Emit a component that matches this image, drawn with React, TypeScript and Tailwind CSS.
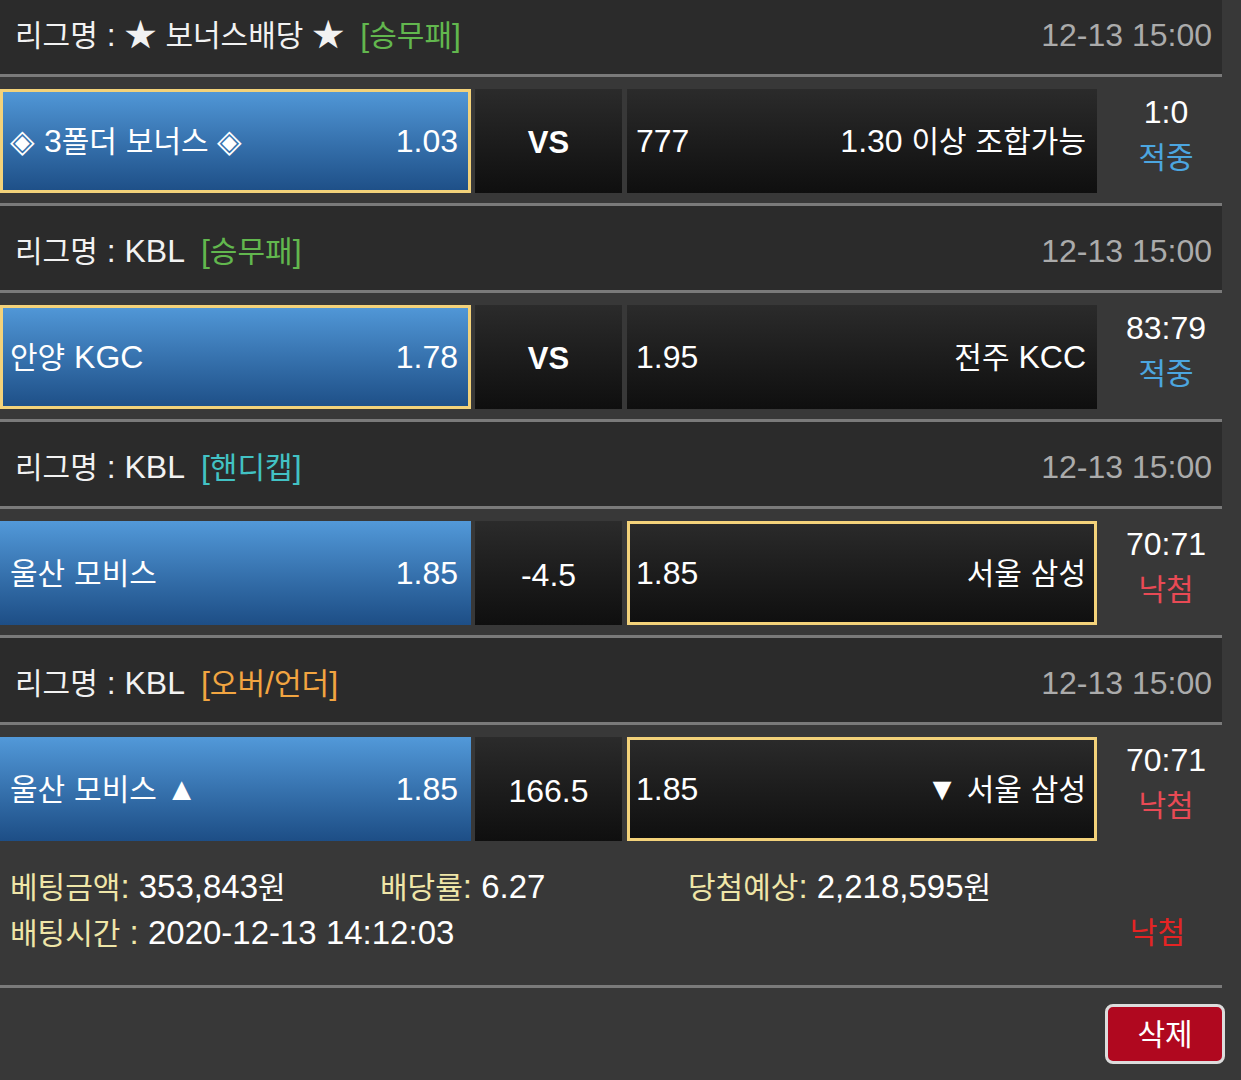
import React from "react";

const HANGUL = /([\uAC00-\uD7A3]+)/;
function T({ s }: { s: string }) {
  return (
    <>
      {s.split(HANGUL).map((p, i) =>
        i % 2 === 1 ? (
          <span key={i} className="text-[30px]">
            {p}
          </span>
        ) : (
          <React.Fragment key={i}>{p}</React.Fragment>
        )
      )}
    </>
  );
}

type Match = {
  league: string;
  tag: string;
  tagClass: string;
  home: string;
  homeOdds: string;
  homeSel: boolean;
  mid: string;
  midBold: boolean;
  awayOdds: string;
  away: string;
  awaySel: boolean;
  score: string;
  result: string;
  resultClass: string;
};

const matches: Match[] = [
  {
    league: "★ 보너스배당 ★",
    tag: "[승무패]",
    tagClass: "text-[#62b74e]",
    home: "◈ 3폴더 보너스 ◈",
    homeOdds: "1.03",
    homeSel: true,
    mid: "VS",
    midBold: true,
    awayOdds: "777",
    away: "1.30 이상 조합가능",
    awaySel: false,
    score: "1:0",
    result: "적중",
    resultClass: "text-[#4ca6e0]",
  },
  {
    league: "KBL",
    tag: "[승무패]",
    tagClass: "text-[#62b74e]",
    home: "안양 KGC",
    homeOdds: "1.78",
    homeSel: true,
    mid: "VS",
    midBold: true,
    awayOdds: "1.95",
    away: "전주 KCC",
    awaySel: false,
    score: "83:79",
    result: "적중",
    resultClass: "text-[#4ca6e0]",
  },
  {
    league: "KBL",
    tag: "[핸디캡]",
    tagClass: "text-[#42c2c4]",
    home: "울산 모비스",
    homeOdds: "1.85",
    homeSel: false,
    mid: "-4.5",
    midBold: false,
    awayOdds: "1.85",
    away: "서울 삼성",
    awaySel: true,
    score: "70:71",
    result: "낙첨",
    resultClass: "text-[#e84a55]",
  },
  {
    league: "KBL",
    tag: "[오버/언더]",
    tagClass: "text-[#f2a541]",
    home: "울산 모비스 ▲",
    homeOdds: "1.85",
    homeSel: false,
    mid: "166.5",
    midBold: false,
    awayOdds: "1.85",
    away: "▼ 서울 삼성",
    awaySel: true,
    score: "70:71",
    result: "낙첨",
    resultClass: "text-[#e84a55]",
  },
];

function Line() {
  return <div className="h-[3px] w-[1222px] bg-[#7a7a7a]" />;
}

function Header({ m }: { m: Match }) {
  return (
    <div className="flex h-[84px] w-[1222px] items-center justify-between bg-[#2b2b2b] pl-[15px] pr-[10px] pt-[6px] text-[32px] text-[#f2f2f2]">
      <div className="flex items-center whitespace-nowrap">
        <span>
          <T s={"리그명 : " + m.league} />
        </span>
        <span className={"ml-[16px] " + m.tagClass}>
          <T s={m.tag} />
        </span>
      </div>
      <div className="text-[#ababab]">12-13 15:00</div>
    </div>
  );
}

function MatchRow({ m }: { m: Match }) {
  return (
    <div className="flex h-[126px] w-[1222px] pb-[10px] pt-[12px] text-[32px] text-white">
      <div
        className={
          "flex w-[471px] items-center justify-between border-[3px] bg-gradient-to-b from-[#5299d9] to-[#1d4e86] bg-origin-border pl-[7px] pr-[10px] " +
          (m.homeSel ? "border-[#f3d27a]" : "border-transparent")
        }
      >
        <span className="whitespace-nowrap">
          <T s={m.home} />
        </span>
        <span>{m.homeOdds}</span>
      </div>
      <div
        className={
          "ml-[4px] flex w-[147px] items-center justify-center bg-gradient-to-b from-[#2b2b2b] to-[#0f0f0f] pt-[4px] " +
          (m.midBold ? "font-bold text-[31px]" : "")
        }
      >
        {m.mid}
      </div>
      <div
        className={
          "ml-[5px] flex w-[470px] items-center justify-between border-[3px] bg-gradient-to-b from-[#2b2b2b] to-[#0f0f0f] bg-origin-border pl-[6px] pr-[8px] " +
          (m.awaySel ? "border-[#f3d27a]" : "border-transparent")
        }
      >
        <span>{m.awayOdds}</span>
        <span className="whitespace-nowrap">
          <T s={m.away} />
        </span>
      </div>
      <div className="flex flex-1 flex-col items-center justify-center pb-[12px] pl-[13px] leading-[46px]">
        <span>{m.score}</span>
        <span className={"text-[30px] " + m.resultClass}>{m.result}</span>
      </div>
    </div>
  );
}

export default function App() {
  return (
    <div className="h-[1080px] w-[1241px] overflow-hidden bg-[#383838] font-['Liberation_Sans','Noto_Sans_CJK_KR',sans-serif]">
      <div className="-mt-[10px]">
        {matches.map((m, i) => (
          <React.Fragment key={i}>
            <Header m={m} />
            <Line />
            <MatchRow m={m} />
            {i < matches.length - 1 && <Line />}
          </React.Fragment>
        ))}
        <div className="w-[1222px] pb-[29px] pl-[10px] pr-[37px] pt-[13px] text-[33px] leading-[45px] text-white">
          <div className="flex whitespace-nowrap">
            <div className="w-[370px]">
              <span className="text-[#efe6a8]">
                <T s="베팅금액:" />
              </span>{" "}
              353,843<T s="원" />
            </div>
            <div className="w-[308px]">
              <span className="text-[#efe6a8]">
                <T s="배당률:" />
              </span>{" "}
              6.27
            </div>
            <div>
              <span className="text-[#efe6a8]">
                <T s="당첨예상:" />
              </span>{" "}
              2,218,595<T s="원" />
            </div>
          </div>
          <div className="flex justify-between whitespace-nowrap">
            <div>
              <span className="text-[#efe6a8]">
                <T s="배팅시간 :" />
              </span>{" "}
              2020-12-13 14:12:03
            </div>
            <div className="text-[30px] text-[#e52424]">낙첨</div>
          </div>
        </div>
        <Line />
        <div className="flex w-[1241px] justify-end pr-[16px] pt-[16px]">
          <button className="flex h-[60px] w-[120px] items-center justify-center rounded-[8px] border-[3px] border-[#dcdcdc] bg-[#b0081f] text-[30px] text-white">
            삭제
          </button>
        </div>
      </div>
    </div>
  );
}
